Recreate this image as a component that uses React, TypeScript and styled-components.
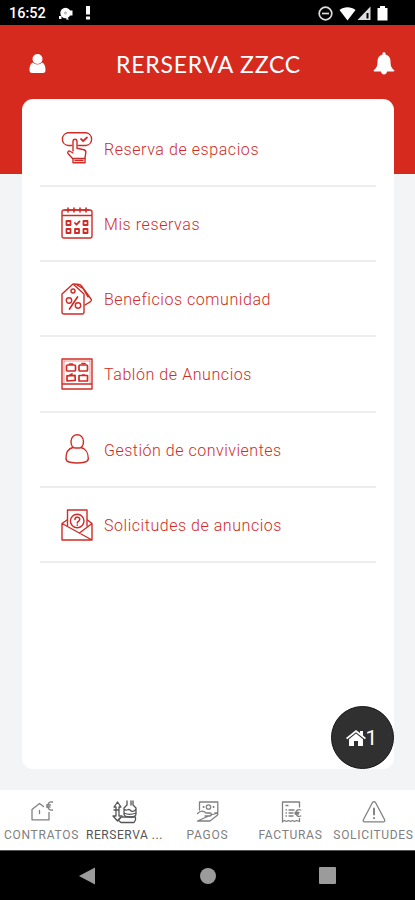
import React from "react";
import styled, { createGlobalStyle } from "styled-components";

const GlobalStyle = createGlobalStyle`
  * { box-sizing: border-box; }
  body { margin: 0; font-family: Roboto, "Liberation Sans", sans-serif; }
  svg { display: block; flex: none; }
`;

const Screen = styled.div`
  position: relative;
  width: 415px;
  height: 900px;
  display: flex;
  flex-direction: column;
  overflow: hidden;
  background: linear-gradient(#d62a1f 174px, #f2f4f6 174px);
`;

const StatusBar = styled.div`
  height: 25px;
  flex: none;
  display: flex;
  align-items: center;
  justify-content: space-between;
  padding: 2px 27px 0 9px;
  background: #000;
  color: #fff;
`;

const StatusGroup = styled.div<{ $gap: number }>`
  display: flex;
  align-items: center;
  gap: ${(p) => p.$gap}px;
`;

const Clock = styled.span`
  width: 38px;
  font-size: 14.5px;
  font-weight: 500;
  line-height: 20px;
  white-space: nowrap;
`;

const Header = styled.header`
  height: 74px;
  flex: none;
  display: grid;
  grid-template-columns: 40px 1fr 40px;
  align-items: center;
  padding: 4px 11px 0 18px;
  color: #fff;
`;

const HeaderButton = styled.button`
  display: flex;
  justify-content: center;
  padding: 0;
  border: 0;
  background: none;
  color: inherit;
`;

const Title = styled.h1`
  margin: 0;
  padding-right: 5px;
  text-align: center;
  font: 400 23px/30px Lato, sans-serif;
  letter-spacing: 0.8px;
  white-space: nowrap;
`;

const Card = styled.main`
  height: 670px;
  flex: none;
  margin: 0 21px 21px 22px;
  padding: 12.4px 18px 0;
  border-radius: 11px;
  background: #fff;
`;

const MenuItem = styled.div`
  height: 75.3px;
  display: flex;
  align-items: center;
  gap: 11px;
  padding-left: 21px;
  border-bottom: 2px solid #ededef;
  color: #cf2c27;
`;

const MenuLabel = styled.span<{ $spacing: number }>`
  padding-top: 3px;
  font-size: 16px;
  font-weight: 300;
  line-height: 20px;
  letter-spacing: ${(p) => p.$spacing}px;
  white-space: nowrap;
`;

const HomeBadge = styled.button`
  position: absolute;
  left: 331px;
  top: 706px;
  width: 63px;
  height: 63px;
  display: flex;
  align-items: center;
  justify-content: center;
  gap: 0;
  padding: 0 2px 0 0;
  border: 1px solid #171717;
  border-radius: 50%;
  background: #303030;
  color: #fff;
  font: 400 21px/24px Roboto, sans-serif;
`;

const TabBar = styled.nav`
  height: 60px;
  flex: none;
  display: grid;
  grid-template-columns: repeat(5, 83px);
  background: #fff;
`;

const Tab = styled.div<{ $active?: boolean }>`
  display: flex;
  flex-direction: column;
  align-items: center;
  gap: 3px;
  padding-top: 9px;
  color: ${(p) => (p.$active ? "#555" : "#808080")};
`;

const TabLabel = styled.span<{ $spacing: number }>`
  font-size: 12px;
  line-height: 15px;
  letter-spacing: ${(p) => p.$spacing}px;
  white-space: nowrap;
`;

const SystemBar = styled.div`
  height: 50px;
  flex: none;
  display: flex;
  align-items: center;
  justify-content: space-between;
  padding: 0 79px 0 79px;
  border-top: 1px solid #555;
  background: #000;
  color: #9b9b9b;
`;

const MenuIcon = ({ children }: { children: React.ReactNode }) => (
  <svg width="32" height="32" viewBox="0 0 32 32" fill="none" stroke="currentColor" strokeWidth="1.4" strokeLinejoin="round" strokeLinecap="round">
    {children}
  </svg>
);

const TabIcon = ({ children }: { children: React.ReactNode }) => (
  <svg width="26" height="26" viewBox="0 0 26 26" fill="none" stroke="currentColor" strokeWidth="1.3" strokeLinejoin="round" strokeLinecap="round">
    {children}
  </svg>
);

const BookingIcon = () => (
  <MenuIcon>
    <path d="M11 13.5H7A6.4 6.4 0 0 1 7 .8h18a6.4 6.4 0 0 1 0 12.7h-8" />
    <path d="m20 7 2.2 2L26 5.5" strokeWidth="1.7" />
    <path d="M12 19V9.5c0-3 4-3 4 0v6.7l7 1.5c1.4.3 2 1.3 1.8 2.8L24 26v4.8H12V27l-4.800-5.200c-1.300-1.400.4-3.700 2.200-2.300L12 21" />
    <path d="M12 26.500h12M14 28.500h8" />
  </MenuIcon>
);

const CalendarIcon = () => (
  <MenuIcon>
    <path d="M3 3h26c1.5 0 2 1 2 2v24c0 1.5-1 2-2 2H3c-1.500 0-2-.7-2-2V5c0-1.200.5-2 2-2ZM1 8.500h30" />
    <path d="M7 1v4M13 1v4M19 1v4M25 1v4M4 3h24" strokeWidth="1.6" />
    <g strokeWidth="1.8">
      <path d="M5.500 14h4v4h-4zM22.500 14h4v4h-4zM5.500 22h4v4h-4zM14 22h4v4h-4zM22.500 22h4v4h-4z" />
      <path d="m14 16 1.500 1.700 3-3.300" />
    </g>
  </MenuIcon>
);

const TagsIcon = () => (
  <MenuIcon>
    <path d="m12 1 11 10v18c0 1.500-.7 2-2 2H3c-1.300 0-2-.7-2-2V11L12 1Z" />
    <path d="m13 1 5 .5c1 .1 1.800.5 2.500 1.500L30 16c.7 1 .4 2-.5 2.600L24 22M16 2l6 3.500L27 14" />
    <circle cx="12" cy="8" r="2" />
    <path d="m16.500 14-8 12" strokeWidth="1.700" />
    <circle cx="8" cy="17.500" r="2.700" />
    <circle cx="17" cy="22.500" r="2.700" />
  </MenuIcon>
);

const BoardIcon = () => (
  <MenuIcon>
    <path d="M1 1h30v30H1zM2 26h28" />
    <path d="M3 3h26M3 3v22M29 3v22" strokeWidth=".5" />
    <g strokeWidth="1.700">
      <rect x="5.500" y="7" width="9" height="6" rx="1" />
      <rect x="18" y="7" width="8.500" height="6" rx="1" />
      <path d="m6 17.800 8-.5.300 5-8.300.700zM18 17.500h8.500v5.500H18z" />
      <path d="M8.500 6h3M21 5.500h3M9 17l2-1M21.500 17h2" />
    </g>
  </MenuIcon>
);

const PersonIcon = () => (
  <MenuIcon>
    <path d="M10 8.500c0-9 12.500-9 12.500 0 0 3.500-1.800 6.500-4 6.500h-4.300C11.600 15 10 12 10 8.500Z" />
    <path d="M12 14.500C7.500 15.500 5 20 5 25.500c0 2 1 3 3 3.500 5 1.200 11.300 1.200 16.300 0 2-.5 3-1.500 3-3.500 0-5.500-2.800-10-7.300-11" />
  </MenuIcon>
);

const EnvelopeIcon = () => (
  <MenuIcon>
    <path d="M6.500 17V1H26v16" />
    <circle cx="16.200" cy="12" r="6.800" />
    <path d="m6 11-5 3.500V31h30V14.500L26.500 11M1 14.500 31 31M18.500 24 31 14.500" />
    <path d="M14 10.500c0-3.200 5-3 4.700 0-.2 2-2.400 1.800-2.400 3.500M16.300 16v.3" strokeWidth="1.600" />
  </MenuIcon>
);

const menu = [
  { label: "Reserva de espacios", Icon: BookingIcon, spacing: 0.57 },
  { label: "Mis reservas", Icon: CalendarIcon, spacing: 0.58 },
  { label: "Beneficios comunidad", Icon: TagsIcon, spacing: 0.56 },
  { label: "Tablón de Anuncios", Icon: BoardIcon, spacing: 0.57 },
  { label: "Gestión de convivientes", Icon: PersonIcon, spacing: 0.51 },
  { label: "Solicitudes de anuncios", Icon: EnvelopeIcon, spacing: 0.54 },
];

const ContractIcon = () => (
  <TabIcon>
    <path d="M14.500 7.500 10.500 4.500 3 10.500v10.300h17v-7.500M10.500 11.500v3" />
    <path d="M23.500 3c-3-.6-4.700 1-4.700 4s1.700 4.500 4.700 4M17.500 6h4M17.500 8h3.500" />
  </TabIcon>
);

const LeisureIcon = () => (
  <TabIcon>
    <path d="M5.500 3 2 8h2v9H1l4.500 5 3-3M5.500 3 9 8H7v9h3M2 11h5" />
    <path d="M15 2v4l-3 3v6c0 4 12 4 12 0V9l-3-3V2M19 2v4M12 10c3 3 4-1 6 1s4 2 6-1M12 14c4 2 7 2 12 0" />
    <path d="m6 21 3-3h14.500v3L22 23.500H9z" />
  </TabIcon>
);

const PaymentIcon = () => (
  <TabIcon>
    <path d="M4.500 11V3h18.300v11h-3" />
    <circle cx="13.500" cy="8" r="2.200" />
    <path d="M8.500 8h.2M18.500 8h.2" strokeWidth="1.800" />
    <path d="M2.500 14.500c3-3 6-3 8.500-.5h4c2 0 2 3 0 3h-5M16 16l5-1.500c2-.4 2.500 1 1 2L15 22H2.500z" />
  </TabIcon>
);

const InvoiceIcon = () => (
  <TabIcon>
    <path d="M21.500 8V3H4.500v20M4.500 22.500l2-1 2 1 2-1 2 1 2-1 2 1 2-1 3 1v-3M8 6.500h2M8 11h.5M11 11h5M8 14h.5M11 14h4M8 17h.5M11 17h4" />
    <path d="M22.800 11c-3-1-4.800.3-4.800 3s1.800 4 4.800 3M17 13.500h4M17 15h3.500" />
  </TabIcon>
);

const WarningIcon = () => (
  <TabIcon>
    <path d="M11.500 3.500c.8-1.300 2.200-1.300 3 0l9 17c.7 1.500.2 2.300-1.300 2.300H3.800c-1.500 0-2-.8-1.300-2.300Z" />
    <path d="M13 9.500v6M13 19v.3" strokeWidth="1.900" />
  </TabIcon>
);

const tabs = [
  { label: "CONTRATOS", Icon: ContractIcon, spacing: 0.75 },
  { label: "RERSERVA ...", Icon: LeisureIcon, spacing: 0.55, active: true },
  { label: "PAGOS", Icon: PaymentIcon, spacing: 0.75 },
  { label: "FACTURAS", Icon: InvoiceIcon, spacing: 0.7 },
  { label: "SOLICITUDES", Icon: WarningIcon, spacing: 0.68 },
];

export default function App() {
  return (
    <Screen>
      <GlobalStyle />
      <StatusBar>
        <StatusGroup $gap={12}>
          <Clock>16:52</Clock>
          <svg width="14" height="14" viewBox="0 0 14 14" fill="#fff">
            <circle cx="6.500" cy="6" r="5.200" />
            <path d="M11 3.500h2.500v5H11zM0 9h2.500v3H0zM8 10l2 2.500H7z" />
            <circle cx="6.500" cy="6" r="1.500" fill="#bbb" />
          </svg>
          <svg width="6" height="15" viewBox="0 0 6 15" fill="#fff">
            <path d="M1 0h4v8.500H1zM1 10.500h4v3H1z" />
          </svg>
        </StatusGroup>
        <StatusGroup $gap={6}>
          <svg width="15" height="15" viewBox="0 0 15 15" fill="none" stroke="#ddd" strokeWidth="1.700">
            <circle cx="7.500" cy="7.500" r="6.300" />
            <path d="M4 7.500h7" />
          </svg>
          <StatusGroup $gap={1}>
            <svg width="17" height="15" viewBox="0 0 17 15" fill="#fff">
              <path d="M.5 4C5 .4 12 .4 16.500 4L8.500 14.500Z" />
            </svg>
            <svg width="14" height="15" viewBox="0 0 14 15">
              <path d="M13.500.5V14H.5Z" fill="#ddd" />
              <path d="M9.500 7h2v5.500h-2z" fill="#000" />
            </svg>
          </StatusGroup>
          <svg width="11" height="15" viewBox="0 0 11 15" fill="#fff">
            <path d="M3 0h5v2h2.500v12.500H.5V2H3Z" />
          </svg>
        </StatusGroup>
      </StatusBar>
      <Header>
        <HeaderButton aria-label="Perfil">
          <svg width="18" height="22" viewBox="0 0 18 22" fill="#fff">
            <circle cx="8.500" cy="6" r="5" />
            <path d="M4 9.500c2 2.500 7 2.500 9 0 2.500 1 3.500 3.500 3.500 7.500 0 2-.8 3-2.500 3H3c-1.700 0-2.500-1-2.500-3C.5 13 1.500 10.500 4 9.500Z" />
          </svg>
        </HeaderButton>
        <Title>RERSERVA ZZCC</Title>
        <HeaderButton aria-label="Avisos">
          <svg width="22" height="24" viewBox="0 0 22 24" fill="#fff">
            <path d="M9.500 1.500c0-1.700 3-1.700 3 0v1c3.500.8 5 3.300 5 7 0 4.500 1 6.500 3.500 8.500.7.600.3 1.500-.6 1.500H14c-.4 4-5.600 4-6 0H1.600C.7 19.500.3 18.600 1 18c2.500-2 3.500-4 3.500-8.500 0-3.700 1.500-6.200 5-7Z" />
          </svg>
        </HeaderButton>
      </Header>
      <Card>
        {menu.map(({ label, Icon, spacing }) => (
          <MenuItem key={label}>
            <Icon />
            <MenuLabel $spacing={spacing}>{label}</MenuLabel>
          </MenuItem>
        ))}
      </Card>
      <HomeBadge>
        <svg width="20" height="18" viewBox="0 0 20 18" fill="#fff">
          <path d="M0 9 10 1l4 3V2h3v4.500L20 9l-1.200 1.200L10 3.200l-8.800 7Z" />
          <path d="m10 4.500 7 5.700V17h-5v-5H8v5H3v-6.800Z" />
        </svg>
        1
      </HomeBadge>
      <TabBar>
        {tabs.map(({ label, Icon, spacing, active }) => (
          <Tab key={label} $active={active}>
            <Icon />
            <TabLabel $spacing={spacing}>{label}</TabLabel>
          </Tab>
        ))}
      </TabBar>
      <SystemBar>
        <svg width="17" height="18" viewBox="0 0 17 18" fill="currentColor">
          <path d="M0 9 16 .5v17Z" />
        </svg>
        <svg width="16" height="16" viewBox="0 0 16 16" fill="currentColor">
          <circle cx="8" cy="8" r="8" />
        </svg>
        <svg width="17" height="17" viewBox="0 0 17 17" fill="currentColor">
          <rect width="17" height="17" rx="1" />
        </svg>
      </SystemBar>
    </Screen>
  );
}
